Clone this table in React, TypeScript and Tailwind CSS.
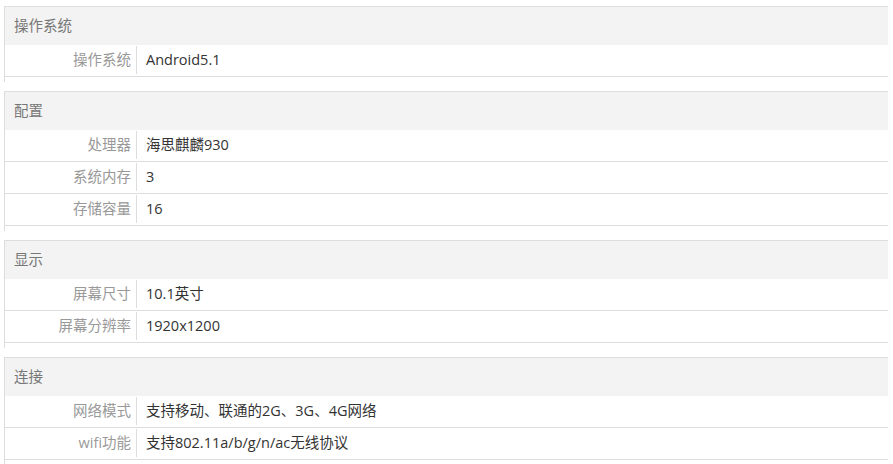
import React from "react";

type Row = { label: string; value: string };
type Section = { title: string; rows: Row[] };

const sections: Section[] = [
  { title: "操作系统", rows: [{ label: "操作系统", value: "Android5.1" }] },
  {
    title: "配置",
    rows: [
      { label: "处理器", value: "海思麒麟930" },
      { label: "系统内存", value: "3" },
      { label: "存储容量", value: "16" },
    ],
  },
  {
    title: "显示",
    rows: [
      { label: "屏幕尺寸", value: "10.1英寸" },
      { label: "屏幕分辨率", value: "1920x1200" },
    ],
  },
  {
    title: "连接",
    rows: [
      { label: "网络模式", value: "支持移动、联通的2G、3G、4G网络" },
      { label: "wifi功能", value: "支持802.11a/b/g/n/ac无线协议" },
    ],
  },
];

export default function App() {
  return (
    <div
      className="w-[893px] h-[464px] overflow-hidden bg-white pt-[6px] pl-[4px] text-[14.5px]"
      style={{ fontFamily: '"Open Sans", "Noto Sans CJK SC", sans-serif' }}
    >
      {sections.map((s) => (
        <div
          key={s.title}
          className="w-[884px] border-t border-l border-[#dddddd] mb-[9px] pb-[5px]"
        >
          <div className="h-[38px] bg-[#f3f3f3] pl-[9px] flex items-center text-[#777777]">
            {s.title}
          </div>
          {s.rows.map((r) => (
            <div
              key={r.label}
              className="h-[32px] border-b border-[#dddddd] flex items-start"
            >
              <div className="mt-[1px] w-[132px] h-[28px] border-r border-[#dddddd] text-right pr-[5px] leading-[28px] text-[#999999] whitespace-nowrap">
                {r.label}
              </div>
              <div className="pl-[9px] mt-[1px] leading-[28px] text-[#333333] whitespace-nowrap">
                {r.value}
              </div>
            </div>
          ))}
        </div>
      ))}
    </div>
  );
}
